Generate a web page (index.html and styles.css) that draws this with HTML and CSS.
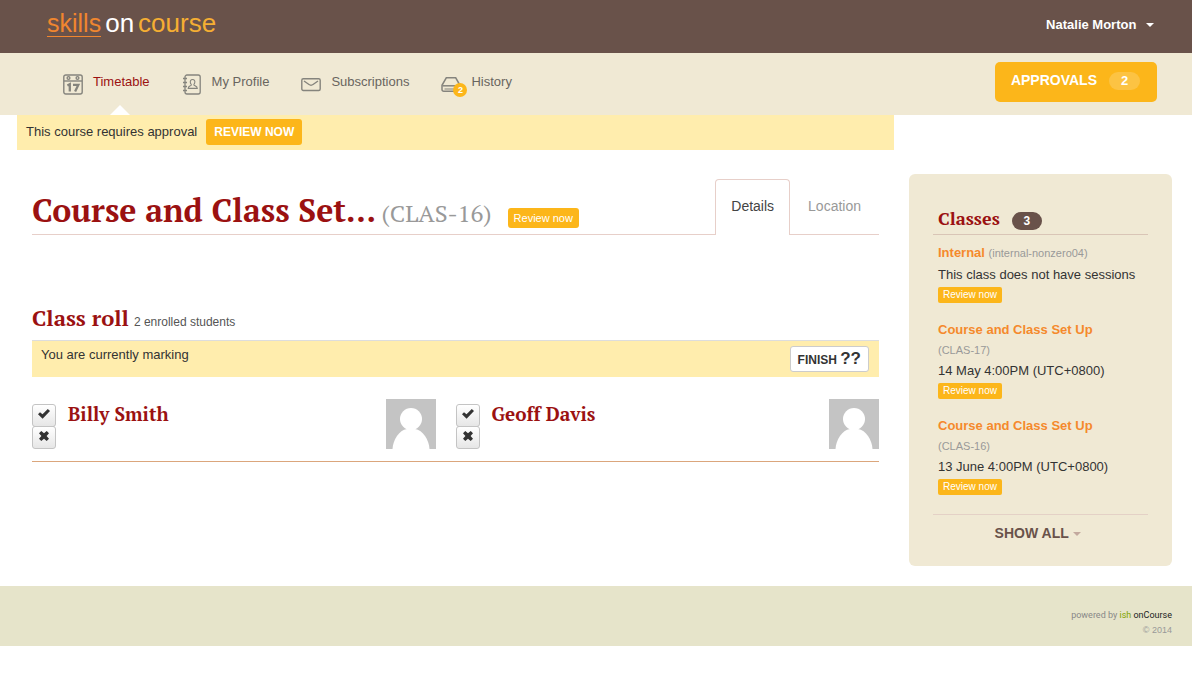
FILE: index.html
```html
<!DOCTYPE html>
<html lang="en">
<head>
<meta charset="utf-8">
<title>Skills onCourse</title>
<link rel="stylesheet" href="styles.css">
</head>
<body>
<header class="top">
  <a class="logo" href="#"><span class="logo-skills">skills</span><span class="logo-on">on</span><span class="logo-course">course</span></a>
  <button class="user" type="button">Natalie Morton <span class="caret"></span></button>
</header>
<nav class="nav">
  <ul class="menu">
    <li><a class="menu-link active" href="#">
      <svg class="icon" width="20" height="21" viewBox="0 0 20 21" fill="none" stroke="#85847d" stroke-width="1.4"><rect x=".8" y="1" width="18.4" height="19" rx="2"/><path d="M1 7h18"/><circle cx="5.5" cy="4" r="1.4"/><circle cx="14.5" cy="4" r="1.4"/><path d="M4.4 11.5l2.4-1.3v7.3M10 10.9h5.3l-3.2 6.6" stroke-width="2.3"/></svg>
      Timetable</a></li>
    <li><a class="menu-link" href="#">
      <svg class="icon" width="20" height="21" viewBox="0 0 20 21" fill="none" stroke="#85847d" stroke-width="1.3"><rect x="3" y="1" width="15.2" height="19" rx="2"/><path d="M1 4.5h4M1 8.5h4M1 12.5h4M1 16.5h4"/><path d="M10.5 5.5c2 0 2.7 1.500 2.200 3.300-.3 1.200-1.100 1.500-.8 2.300.5.900 3.400.9 3.400 3.300H6.200c0-2.400 2.700-2.400 3.100-3.300.3-.8-.6-1.100-.9-2.300-.4-1.800.3-3.300 2.100-3.300z" stroke-width="1.1"/></svg>
      My Profile</a></li>
    <li><a class="menu-link" href="#">
      <svg class="icon" width="20" height="21" viewBox="0 0 20 21" fill="none" stroke="#85847d" stroke-width="1.4"><rect x=".8" y="4.800" width="18.400" height="11.700" rx="1.500"/><path d="M3 7l5 3.500c1.300.9 2.700.9 4 0L17 7"/></svg>
      Subscriptions</a></li>
    <li><a class="menu-link" href="#">
      <span class="icon-wrap"><svg class="icon" width="20" height="21" viewBox="0 0 20 21" fill="none" stroke="#85847d" stroke-width="1.500"><path d="M5.300 3.800h9.400L19 11.300v4.200c0 1-.6 1.800-1.700 1.800H2.700c-1 0-1.700-.8-1.700-1.800v-4.200z"/><path d="M1.500 11.800h17"/><path d="M3.500 15h12" stroke-width="1"/></svg><span class="bubble">2</span></span>
      History</a></li>
  </ul>
  <a class="approvals" href="#">APPROVALS <span class="approvals-count">2</span></a>
</nav>
<div class="page">
  <main class="main">
    <div class="notice">This course requires approval <a class="review-large" href="#">REVIEW NOW</a></div>
    <div class="content">
      <div class="title-row">
        <h1 class="title">Course and Class Set... <span class="code">(CLAS-16)</span></h1>
        <a class="review review-title" href="#">Review now</a>
        <div class="tabs"><a class="tab tab-active" href="#">Details</a><a class="tab" href="#">Location</a></div>
      </div>
      <section>
        <div class="roll-head"><h2 class="roll-title">Class roll</h2><span class="roll-count">2 enrolled students</span></div>
        <div class="marking"><span>You are currently marking</span><button class="finish" type="button">FINISH <span class="marks">??</span></button></div>
        <ul class="students">
          <li class="student">
            <div class="toggles">
              <button class="toggle" type="button" aria-label="Mark Billy Smith present"><svg width="14" height="12" viewBox="0 0 14 12"><path d="M1 6.300L3 4.200l2.500 2L10.800 1 13 3 5.600 10.800z" fill="#333"/></svg></button>
              <button class="toggle" type="button" aria-label="Mark Billy Smith absent"><svg width="12" height="12" viewBox="0 0 12 12"><path d="M1 3.300L3.300 1 6 3.200 8.700 1 11 3.300 8.600 6l2.400 2.700L8.700 11 6 8.700 3.300 11 1 8.700 3.400 6z" fill="#333"/></svg></button>
            </div>
            <h3 class="name">Billy Smith</h3>
            <svg class="avatar" width="50" height="50" viewBox="0 0 50 50"><path fill="#c4c4c4" d="M0 0h50v50H0z"/><circle cx="25" cy="20" r="11" fill="#fff"/><path d="M6.500 50C7 41 13 31 21 30h8c8 1 14 11 14.500 20z" fill="#fff"/></svg>
          </li>
          <li class="student">
            <div class="toggles">
              <button class="toggle" type="button" aria-label="Mark Geoff Davis present"><svg width="14" height="12" viewBox="0 0 14 12"><path d="M1 6.300L3 4.200l2.500 2L10.800 1 13 3 5.600 10.800z" fill="#333"/></svg></button>
              <button class="toggle" type="button" aria-label="Mark Geoff Davis absent"><svg width="12" height="12" viewBox="0 0 12 12"><path d="M1 3.300L3.300 1 6 3.200 8.700 1 11 3.300 8.600 6l2.400 2.700L8.700 11 6 8.700 3.300 11 1 8.700 3.400 6z" fill="#333"/></svg></button>
            </div>
            <h3 class="name">Geoff Davis</h3>
            <svg class="avatar" width="50" height="50" viewBox="0 0 50 50"><path fill="#c4c4c4" d="M0 0h50v50H0z"/><circle cx="25" cy="20" r="11" fill="#fff"/><path d="M6.500 50C7 41 13 31 21 30h8c8 1 14 11 14.500 20z" fill="#fff"/></svg>
          </li>
        </ul>
      </section>
    </div>
  </main>
  <aside class="side">
    <div class="side-head"><h2 class="side-title">Classes</h2><span class="side-count">3</span></div>
    <ul class="classes">
      <li class="class">
        <div class="class-head"><a class="class-name" href="#">Internal</a> <span class="class-code">(internal-nonzero04)</span></div>
        <div class="class-when">This class does not have sessions</div>
        <a class="review" href="#">Review now</a>
      </li>
      <li class="class">
        <div class="class-head"><a class="class-name" href="#">Course and Class Set Up</a></div>
        <div class="class-code">(CLAS-17)</div>
        <div class="class-when">14 May 4:00PM (UTC+0800)</div>
        <a class="review" href="#">Review now</a>
      </li>
      <li class="class">
        <div class="class-head"><a class="class-name" href="#">Course and Class Set Up</a></div>
        <div class="class-code">(CLAS-16)</div>
        <div class="class-when">13 June 4:00PM (UTC+0800)</div>
        <a class="review" href="#">Review now</a>
      </li>
    </ul>
    <button class="show-all" type="button">SHOW ALL <span class="caret"></span></button>
  </aside>
</div>
<footer class="footer">
  <div class="powered">powered by <a class="ish" href="#">ish</a> <a class="oncourse" href="#">onCourse</a></div>
  <div class="copyright">© 2014</div>
</footer>
</body>
</html>
```

FILE: styles.css
```css
* { box-sizing: border-box; }
body {
  margin: 0;
  background: #fff;
  color: #333;
  font: 13px/20px "Liberation Sans", Arial, sans-serif;
}
a { color: inherit; text-decoration: none; }
button { font: inherit; cursor: pointer; }
h1, h2, h3 {
  margin: 0;
  color: #9b1111;
  font-family: "PT Serif", "Liberation Serif", serif;
  font-weight: bold;
}
ul { margin: 0; padding: 0; list-style: none; }
.caret {
  display: inline-block;
  border: 4px solid transparent;
  border-top-color: currentColor;
  border-bottom: 0;
  vertical-align: middle;
}

.top {
  display: flex;
  justify-content: space-between;
  align-items: center;
  height: 53px;
  padding: 0 38px 4px 47px;
  background: #69524a;
}
.logo {
  display: flex;
  align-items: baseline;
  gap: 4px;
  padding-bottom: 2px;
  font-size: 26px;
  line-height: 25px;
}
.logo-skills { color: #f0862f; border-bottom: 1px solid #f0862f; font-size: 25px; }
.logo-on { color: #fff; }
.logo-course { color: #f5ae33; }
.user {
  padding: 0;
  border: 0;
  background: none;
  color: #fff;
  font-weight: bold;
}
.user .caret { margin-left: 6px; }

.nav {
  display: flex;
  justify-content: space-between;
  height: 62px;
  padding: 9px 35px 0 63px;
  background: #f0e9d4;
}
.menu { display: flex; gap: 32px; }
.menu-link {
  position: relative;
  display: flex;
  gap: 10px;
  height: 53px;
  padding-top: 10px;
  color: #69655f;
  font-size: 13px;
}
.active { color: #9b1111; }
.active::after {
  content: "";
  position: absolute;
  right: 20px;
  bottom: 0;
  border: 10px solid transparent;
  border-top: 0;
  border-bottom-color: #fff;
}
.icon { display: block; margin-top: 2px; }
.icon-wrap { position: relative; }
.bubble {
  position: absolute;
  left: 12px;
  top: 11px;
  width: 14px;
  height: 14px;
  border-radius: 7px;
  background: #fcb61a;
  color: #fff;
  font-size: 9px;
  line-height: 14px;
  font-weight: bold;
  text-align: center;
}
.approvals {
  display: flex;
  gap: 12px;
  height: 40px;
  padding: 8px 17px 8px 16px;
  border-radius: 5px;
  background: #fcb61a;
  color: #fff;
  font-size: 14px;
  font-weight: bold;
}
.approvals-count {
  width: 31px;
  height: 18px;
  margin-top: 2px;
  border-radius: 9px;
  background: #fcc343;
  font-size: 13px;
  line-height: 17px;
  text-align: center;
}

.page {
  display: flex;
  align-items: flex-start;
  gap: 15px;
  padding: 0 20px 20px 17px;
}
.main { flex: 1; min-width: 0; }
.notice {
  display: flex;
  align-items: center;
  gap: 9px;
  height: 35px;
  padding: 0 9px 2px;
  background: #ffedad;
}
.review-large {
  padding: 3px 8px;
  border-radius: 3px;
  background: #fcb61a;
  color: #fff;
  font-size: 12px;
  font-weight: bold;
}
.content { padding: 29px 15px 0; }
.title-row {
  display: flex;
  height: 56px;
  border-bottom: 1px solid #e7cfc9;
}
.title { font-size: 32px; line-height: 62px; white-space: nowrap; }
.code { margin-left: -2px; color: #999; font-size: 24px; font-weight: normal; }
.review {
  display: inline-block;
  padding: 0 5px;
  border-radius: 2px;
  background: #fcb61a;
  color: #fff;
  font-size: 10px;
  line-height: 16px;
}
.review-title {
  align-self: flex-start;
  margin: 29px 0 0 16px;
  padding: 0 6px;
  border-radius: 3px;
  font-size: 11px;
  line-height: 20px;
}
.tabs { display: flex; height: 56px; margin-left: auto; }
.tab {
  padding: 17px 18px 0;
  color: #999;
  font-size: 14px;
}
.tab-active {
  padding: 16px 15px 0;
  border: 1px solid #e7cfc9;
  border-bottom: 0;
  border-radius: 4px 4px 0 0;
  background: #fff;
  color: #444;
}

.roll-head {
  display: flex;
  align-items: baseline;
  gap: 5px;
  margin-top: 70px;
  padding-bottom: 8px;
  border-bottom: 1px solid #ddd;
}
.roll-title { font-size: 22px; line-height: 26px; }
.roll-count { color: #555; font-size: 12px; }
.marking {
  display: flex;
  justify-content: space-between;
  height: 36px;
  padding: 4px 10px 4px 9px;
  background: #ffedad;
}
.finish {
  height: 26px;
  margin-top: 1px;
  padding: 0 7px;
  border: 1px solid #ccc;
  border-radius: 3px;
  background: #fff;
  color: #333;
  font-size: 12px;
  line-height: 20px;
  font-weight: bold;
}
.marks { font-size: 17px; }
.students {
  display: grid;
  grid-template-columns: 1fr 1fr;
  padding: 22px 0 12px;
  border-bottom: 1px solid #dba67c;
}
.student { display: flex; gap: 12px; }
.student:first-child { padding-right: 20px; }
.toggles { display: flex; flex-direction: column; padding-top: 5px; }
.toggle {
  display: flex;
  justify-content: center;
  align-items: center;
  width: 24px;
  height: 23px;
  padding: 0 0 3px;
  border: 1px solid #c4c4c4;
  border-radius: 3px;
  background: linear-gradient(#fff, #e6e6e6);
}
.toggle + .toggle { margin-top: -1px; }
.name { flex: 1; padding-top: 3px; font-size: 19px; line-height: 24px; }

.side {
  width: 263px;
  margin-top: 59px;
  padding: 30px 24px 23px;
  border-radius: 6px;
  background: #f0e9d4;
}
.side-head {
  display: flex;
  align-items: center;
  gap: 12px;
  padding: 0 5px 1px;
  border-bottom: 1px solid #d9c5b6;
}
.side-title { font-size: 18px; line-height: 29px; }
.side-count {
  width: 30px;
  height: 18px;
  margin-top: 4px;
  border-radius: 9px;
  background: #69524a;
  color: #fff;
  font-size: 12px;
  line-height: 18px;
  font-weight: bold;
  text-align: center;
}
.classes {
  display: grid;
  gap: 16px;
  padding: 7px 5px 19px;
  border-bottom: 1px solid #e4d1c6;
}
.class-head { line-height: 22px; }
.class-name { color: #f5892c; font-weight: bold; }
.class-code { color: #999; font-size: 11px; line-height: 19px; }
.class-when { line-height: 22px; }
.class .review { display: block; width: 64px; margin-top: 1px; }
.show-all {
  display: block;
  width: 100%;
  padding: 8px 5px 0 0;
  border: 0;
  background: none;
  color: #69524a;
  font-size: 14px;
  font-weight: bold;
}
.show-all .caret { color: #c3a99e; }
.side .caret { margin-left: 1px; }

.footer {
  height: 60px;
  padding: 22px 20px 0;
  background: #e6e4ca;
  text-align: right;
}
.powered { color: #888; font: 9px/15px "Roboto", sans-serif; }
.ish { color: #7ea300; }
.oncourse { color: #222; }
.copyright { color: #999; font-size: 9px; line-height: 14px; }
```
